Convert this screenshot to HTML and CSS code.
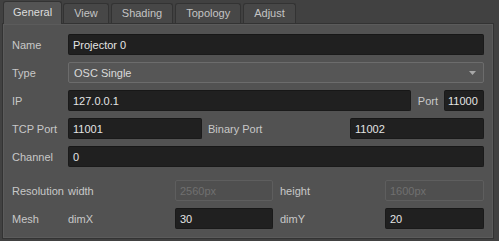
FILE: index.html
```html
<!DOCTYPE html>
<html lang="en">
<head>
    <meta charset="UTF-8">
    <title>Projector settings</title>
    <link rel="stylesheet" href="styles.css">
</head>
<body>
    <div class="tabs">
        <div class="tab active">General</div>
        <div class="tab">View</div>
        <div class="tab">Shading</div>
        <div class="tab">Topology</div>
        <div class="tab">Adjust</div>
    </div>

    <div class="panel">
        <div class="row">
            <span class="label">Name</span>
            <div class="field grow">Projector 0</div>
        </div>
        <div class="row">
            <span class="label">Type</span>
            <div class="combo grow">
                <span>OSC Single</span>
                <svg class="arrow" width="7" height="4" viewBox="0 0 7 4"><path d="M0 0H7L3.5 4Z" fill="#a8a8a8"/></svg>
            </div>
        </div>
        <div class="row">
            <span class="label">IP</span>
            <div class="field grow">127.0.0.1</div>
            <span class="sublabel port-label">Port</span>
            <div class="field port">11000</div>
        </div>
        <div class="row">
            <span class="label">TCP Port</span>
            <div class="field tcp">11001</div>
            <span class="sublabel binary-label">Binary Port</span>
            <div class="field grow">11002</div>
        </div>
        <div class="row">
            <span class="label">Channel</span>
            <div class="field grow">0</div>
        </div>

        <div class="row section">
            <span class="label">Resolution</span>
            <span class="sublabel pair-label">width</span>
            <div class="field small disabled">2560px</div>
            <span class="sublabel pair-label2">height</span>
            <div class="field grow disabled">1600px</div>
        </div>
        <div class="row">
            <span class="label">Mesh</span>
            <span class="sublabel pair-label">dimX</span>
            <div class="field small">30</div>
            <span class="sublabel pair-label2">dimY</span>
            <div class="field grow">20</div>
        </div>
    </div>
</body>
</html>
```

FILE: styles.css
```css
body {
    margin: 0;
    background: #414141;
    font-family: "Liberation Sans", Arial, sans-serif;
    font-size: 11px;
    color: #c8c8c8;
    width: 499px;
    height: 241px;
    overflow: hidden;
}
.tabs {
    display: flex;
    align-items: flex-end;
    gap: 2px;
    height: 23px;
    padding-left: 3px;
}
.tab {
    height: 19px;
    line-height: 19px;
    padding: 0 10px;
    background: #474747;
    border: 1px solid #333333;
    border-bottom: none;
    border-radius: 3px 3px 0 0;
    color: #c4c4c4;
}
.tab.active {
    height: 22px;
    line-height: 21px;
    padding: 0 9px;
    background: #545454;
    color: #dcdcdc;
    position: relative;
    top: 1px;
    margin-right: -1px;
    z-index: 2;
}
.panel {
    margin-left: 2px;
    width: 492px;
    height: 216px;
    background: #525252;
    border: 1px solid #333333;
    box-shadow: inset 0 0 0 1px #5b5b5b;
    padding: 10px 9px 0 9px;
    box-sizing: border-box;
    position: relative;
    z-index: 1;
}
.row {
    display: flex;
    align-items: center;
    height: 21px;
    margin-bottom: 7px;
}
.row.section {
    margin-top: 13px;
}
.label {
    width: 56px;
    flex: none;
}
.sublabel {
    flex: none;
}
.port-label {
    margin: 0 6px 0 7px;
}
.binary-label {
    width: 142px;
    margin-left: 6px;
}
.pair-label {
    width: 107px;
}
.pair-label2 {
    width: 105px;
    margin-left: 7px;
}
.field {
    height: 21px;
    line-height: 20px;
    box-sizing: border-box;
    padding: 0 4px;
    background: #202020;
    border: 1px solid #1a1a1a;
    border-top-color: #171717;
    border-radius: 2px;
    color: #e4e4e4;
    white-space: nowrap;
}
.grow {
    flex: 1;
}
.port {
    width: 40px;
    padding: 0 3px;
}
.tcp {
    width: 134px;
}
.small {
    width: 98px;
}
.field.disabled {
    background: #4f4f4f;
    border-color: #5e5e5e;
    color: #6f6f6f;
}
.combo {
    height: 21px;
    box-sizing: border-box;
    display: flex;
    align-items: center;
    justify-content: space-between;
    padding: 0 7px 0 5px;
    background: #565656;
    border: 1px solid #6c6c6c;
    border-radius: 2px;
    color: #dadada;
}
.arrow {
    display: block;
}
```
